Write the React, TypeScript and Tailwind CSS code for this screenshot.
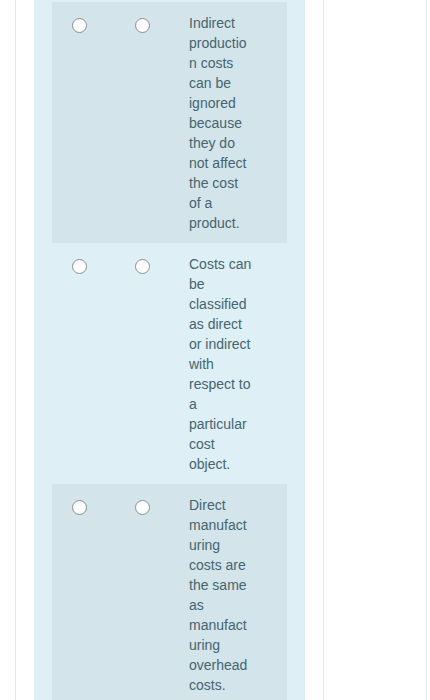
const options = [
  {
    text: "Indirect production costs can be ignored because they do not affect the cost of a product.",
    striped: true,
  },
  {
    text: "Costs can be classified as direct or indirect with respect to a particular cost object.",
    striped: false,
  },
  {
    text: "Direct manufacturing costs are the same as manufacturing overhead costs.",
    striped: true,
  },
];

function Radio() {
  return (
    <div className="mt-[5px] h-[15px] w-[15px] shrink-0 rounded-full border-[1.5px] border-[#8d8d8d] bg-white" />
  );
}

export default function App() {
  return (
    <div
      className="flex h-[700px] w-[430px] overflow-hidden bg-white"
      style={{ fontFamily: '"Liberation Sans", Arial, sans-serif' }}
    >
      <div className="ml-[15px] flex w-[309px] shrink-0 border-l border-r border-[#e6e6e6] pl-[18px]">
        <div className="w-[271px] bg-[#deeff6] px-[18px] pt-[2px]">
          {options.map((o) => (
            <div
              key={o.text}
              className={
                "flex pb-[10px] pl-[20px] pt-[11px] " +
                (o.striped ? "bg-[#d3e4eb]" : "")
              }
            >
              <Radio />
              <div className="ml-[48px]">
                <Radio />
              </div>
              <p className="ml-[39px] w-[63px] break-words text-[14px] leading-[20px] text-[#45656f]">
                {o.text}
              </p>
            </div>
          ))}
        </div>
      </div>
      <div className="w-[103px] shrink-0 border-r border-[#ececec]" />
    </div>
  );
}
